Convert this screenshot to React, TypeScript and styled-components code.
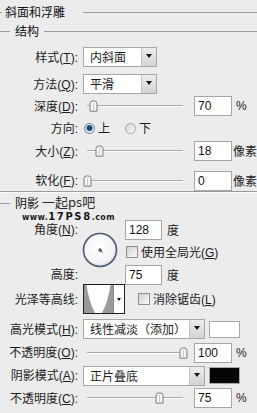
import { createGlobalStyle, styled } from 'styled-components';

const cjk = `"Noto Sans CJK SC", "Liberation Sans", sans-serif`;
const latin = `"Liberation Sans", Arial, sans-serif`;

const GlobalStyle = createGlobalStyle`
  body {
    margin: 0;
    background: #ececec;
  }
`;

type SliderRow = {
  label: string;
  key: string;
  pos: number;
  value: string;
  unit: string;
};

const Mn = ({ label, k }: { label: string; k?: string }) => (
  <>
    {label}
    <Latin>
      {k && (
        <>
          (<Mnemonic>{k}</Mnemonic>)
        </>
      )}
      :
    </Latin>
  </>
);

const Slider = ({ pos }: { pos: number }) => (
  <SliderBox>
    <Track />
    <ThumbWrap style={{ left: 4 + pos * 96 - 4.5 }}>
      <svg width="9" height="12" viewBox="0 0 9 12">
        <path
          d="M1 3.5 Q1 0.8 4.5 0.8 Q8 0.8 8 3.5 L8 11.2 L1 11.2 Z"
          fill="#f4f4f4"
          stroke="#7c7c7c"
          strokeWidth="1"
        />
        <line x1="4.5" y1="3" x2="4.5" y2="10" stroke="#c9c9c9" />
      </svg>
    </ThumbWrap>
  </SliderBox>
);

const structureSliders: SliderRow[] = [
  { label: '大小', key: 'Z', pos: 0.135, value: '18', unit: '像素' },
  { label: '软化', key: 'F', pos: 0, value: '0', unit: '像素' },
];

export default function App() {
  return (
    <>
      <GlobalStyle />
      <Panel>
        <TitleRow>
          <Tick $w={2} />
          <TitleText>斜面和浮雕</TitleText>
          <Rule />
        </TitleRow>

        <GroupRow>
          <Tick $w={10} />
          <GroupText>结构</GroupText>
          <Rule />
        </GroupRow>

        <Row $mt={9} $h={20}>
          <Label>
            <Mn label="样式" k="T" />
          </Label>
          <Select $w={74}>
            <SelectText>内斜面</SelectText>
            <SelectArrow />
          </Select>
        </Row>

        <Row $mt={7} $h={20}>
          <Label>
            <Mn label="方法" k="Q" />
          </Label>
          <Select $w={74}>
            <SelectText>平滑</SelectText>
            <SelectArrow />
          </Select>
        </Row>

        <Row $mt={2} $h={20}>
          <Label>
            <Mn label="深度" k="D" />
          </Label>
          <Slider pos={0.07} />
          <NumberBox $w={38}>70</NumberBox>
          <Unit>%</Unit>
        </Row>

        <Row $mt={5} $h={14}>
          <Label>
            <Mn label="方向" />
          </Label>
          <RadioGroup>
            <RadioOption>
              <Radio $on />上
            </RadioOption>
            <RadioOption>
              <Radio />下
            </RadioOption>
          </RadioGroup>
        </Row>

        {structureSliders.map((s, i) => (
          <Row key={s.key} $mt={i === 0 ? 6 : 10} $h={i === 0 ? 20 : 19}>
            <Label>
              <Mn label={s.label} k={s.key} />
            </Label>
            <Slider pos={s.pos} />
            <NumberBox $w={38}>{s.value}</NumberBox>
            <Unit $tight>{s.unit}</Unit>
          </Row>
        ))}

        <Separator />

        <GroupRow $mt={3}>
          <Tick $w={10} />
          <GroupText>阴影</GroupText>
        </GroupRow>

        <AngleGrid>
          <GridLabel $row={1}>
            <Mn label="角度" k="N" />
          </GridLabel>
          <Dial>
            <svg width="36" height="36" viewBox="0 0 36 36">
              <defs>
                <radialGradient id="dialFill" cx="45%" cy="40%" r="65%">
                  <stop offset="0%" stopColor="#ffffff" />
                  <stop offset="75%" stopColor="#f3f3f5" />
                  <stop offset="100%" stopColor="#c9ccd6" />
                </radialGradient>
              </defs>
              <circle cx="18" cy="18" r="16.5" fill="url(#dialFill)" stroke="#4d5872" strokeWidth="1.6" />
              <line x1="16" y1="18" x2="20" y2="18" stroke="#333" strokeWidth="1" />
              <line x1="18" y1="16" x2="18" y2="20" stroke="#333" strokeWidth="1" />
              <line x1="18" y1="18" x2="20.5" y2="20.5" stroke="#333" strokeWidth="1" />
            </svg>
          </Dial>
          <GridControl $row={1}>
            <NumberBox $w={37}>128</NumberBox>
            <Unit $gap={5}>度</Unit>
          </GridControl>
          <GridControl $row={2}>
            <CheckOption $ml={1}>
              <CheckBox />
              <span>
                使用全局光
                <Latin>
                  (<Mnemonic>G</Mnemonic>)
                </Latin>
              </span>
            </CheckOption>
          </GridControl>
          <GridLabel $row={3}>
            <Mn label="高度" />
          </GridLabel>
          <GridControl $row={3}>
            <NumberBox $w={37}>75</NumberBox>
            <Unit $gap={5}>度</Unit>
          </GridControl>
        </AngleGrid>

        <Row $mt={0} $h={30}>
          <Label>
            <Mn label="光泽等高线" />
          </Label>
          <ContourBox>
            <ContourPreview>
              <svg width="29" height="28" viewBox="0 0 29 28">
                <rect width="29" height="28" fill="#fff" />
                <path d="M0 0 L2.5 0 Q5 17 11 28 L0 28 Z" fill="#9a9a9a" />
                <path d="M29 0 L26.5 0 Q24 17 18 28 L29 28 Z" fill="#9a9a9a" />
              </svg>
            </ContourPreview>
            <ContourArrow />
          </ContourBox>
          <CheckOption $ml={13}>
            <CheckBox />
            <span>
              消除锯齿
              <Latin>
                (<Mnemonic>L</Mnemonic>)
              </Latin>
            </span>
          </CheckOption>
        </Row>

        <Row $mt={5} $h={20}>
          <Label>
            <Mn label="高光模式" k="H" />
          </Label>
          <Select $w={122}>
            <SelectText>线性减淡（添加）</SelectText>
            <SelectArrow />
          </Select>
          <Swatch $color="#ffffff" />
        </Row>

        <Row $mt={4} $h={19}>
          <Label>
            <Mn label="不透明度" k="O" />
          </Label>
          <Slider pos={1} />
          <NumberBox $w={38}>100</NumberBox>
          <Unit>%</Unit>
        </Row>

        <Row $mt={4} $h={19}>
          <Label>
            <Mn label="阴影模式" k="A" />
          </Label>
          <Select $w={122}>
            <SelectText>正片叠底</SelectText>
            <SelectArrow />
          </Select>
          <Swatch $color="#050505" />
        </Row>

        <Row $mt={3} $h={20}>
          <Label>
            <Mn label="不透明度" k="C" />
          </Label>
          <Slider pos={0.75} />
          <NumberBox $w={38}>75</NumberBox>
          <Unit>%</Unit>
        </Row>

        <Watermark>
          <WatermarkTop>一起ps吧</WatermarkTop>
          <WatermarkUrl>
            www.<Big>17PS8</Big>.com
          </WatermarkUrl>
        </Watermark>
      </Panel>
    </>
  );
}

const Panel = styled.div`
  position: relative;
  display: flex;
  flex-direction: column;
  width: 257px;
  height: 413px;
  overflow: hidden;
  background: #ececec;
  color: #1c1c1c;
  font: 12px/1 ${cjk};
`;

const TitleRow = styled.div`
  display: flex;
  align-items: center;
  height: 24px;
  flex-shrink: 0;
`;

const TitleText = styled.div`
  width: 81px;
  padding-left: 3px;
  box-sizing: border-box;
  color: #111;
`;

const GroupRow = styled.div<{ $mt?: number }>`
  display: flex;
  align-items: center;
  gap: 5px;
  height: 14px;
  margin-top: ${({ $mt }) => $mt ?? 0}px;
  flex-shrink: 0;
`;

const GroupText = styled.div`
  color: #111;
`;

const Tick = styled.div<{ $w: number }>`
  width: ${({ $w }) => $w}px;
  border-top: 1px solid #9c9c9c;
  flex-shrink: 0;
`;

const Rule = styled.div`
  flex: 1;
  border-top: 1px solid #9c9c9c;
`;

const Separator = styled.div`
  height: 0;
  margin-top: 1px;
  border-top: 1px solid #9c9c9c;
  border-bottom: 1px solid #fafafa;
  flex-shrink: 0;
`;

const Row = styled.div<{ $mt: number; $h: number }>`
  display: flex;
  align-items: center;
  height: ${({ $h }) => $h}px;
  margin-top: ${({ $mt }) => $mt}px;
  flex-shrink: 0;
`;

const Label = styled.div`
  width: 83px;
  padding-right: 5px;
  box-sizing: border-box;
  text-align: right;
  white-space: nowrap;
  flex-shrink: 0;
`;

const Latin = styled.span`
  font-family: ${latin};
`;

const Mnemonic = styled.span`
  text-decoration: underline;
  text-underline-offset: 1px;
`;

const Select = styled.div<{ $w: number }>`
  display: flex;
  width: ${({ $w }) => $w}px;
  height: 20px;
  box-sizing: border-box;
  border: 1px solid #a7a7a7;
  background: #fff;
  flex-shrink: 0;
`;

const SelectText = styled.div`
  flex: 1;
  display: flex;
  align-items: center;
  padding-left: 6px;
  white-space: nowrap;
  overflow: hidden;
`;

const SelectArrow = styled.div`
  width: 14px;
  display: flex;
  align-items: center;
  justify-content: center;
  border-left: 1px solid #c2c2c2;
  background: linear-gradient(#ededed, #d3d3d3);

  &::after {
    content: '';
    border-left: 3.5px solid transparent;
    border-right: 3.5px solid transparent;
    border-top: 4px solid #151515;
    margin-top: -2px;
  }
`;

const SliderBox = styled.div`
  position: relative;
  display: flex;
  align-items: center;
  width: 111px;
  height: 100%;
  padding: 0 11px 0 4px;
  box-sizing: border-box;
  flex-shrink: 0;
`;

const Track = styled.div`
  flex: 1;
  height: 0;
  border-top: 1px solid #a9a9a9;
  border-bottom: 1px solid #fdfdfd;
`;

const ThumbWrap = styled.div`
  position: absolute;
  top: 50%;
  width: 9px;
  height: 12px;
  margin-top: -6px;
  line-height: 0;
`;

const NumberBox = styled.div<{ $w: number }>`
  display: flex;
  align-items: center;
  width: ${({ $w }) => $w}px;
  height: 20px;
  padding-left: 3px;
  box-sizing: border-box;
  border: 1px solid #a5a5a5;
  background: #fff;
  font: 12px/1 ${latin};
  color: #111;
  flex-shrink: 0;
`;

const Unit = styled.div<{ $tight?: boolean; $gap?: number }>`
  margin-left: ${({ $tight, $gap }) => $gap ?? ($tight ? 1 : 4)}px;
  font-family: ${({ $tight, $gap }) => ($tight || $gap ? cjk : latin)};
  white-space: nowrap;
`;

const RadioGroup = styled.div`
  display: flex;
  align-items: center;
  gap: 15px;
  margin-left: 1px;
`;

const RadioOption = styled.div`
  display: flex;
  align-items: center;
  gap: 3px;
`;

const Radio = styled.span<{ $on?: boolean }>`
  width: 11px;
  height: 11px;
  border-radius: 50%;
  box-sizing: border-box;
  border: 1px solid ${({ $on }) => ($on ? '#6f7f92' : '#a3a3a3')};
  background: ${({ $on }) =>
    $on
      ? 'radial-gradient(circle at 50% 45%, #17486f 0 2px, #3f7bab 2.8px, #e9eef3 3.6px, #d6dbe0 100%)'
      : 'linear-gradient(135deg, #d3d3d3, #fbfbfb)'};
`;

const AngleGrid = styled.div`
  display: grid;
  grid-template-columns: 83px 42px 1fr;
  grid-template-rows: 19px 26px 19px;
  margin-top: 10px;
  flex-shrink: 0;
`;

const GridLabel = styled(Label)<{ $row: number }>`
  grid-column: 1;
  grid-row: ${({ $row }) => $row};
  align-self: center;
`;

const GridControl = styled.div<{ $row: number }>`
  grid-column: 3;
  grid-row: ${({ $row }) => $row};
  display: flex;
  align-items: center;
`;

const Dial = styled.div`
  grid-column: 2;
  grid-row: 1 / 4;
  align-self: start;
  margin: 12px 0 0 -1px;
  width: 36px;
  height: 36px;
  line-height: 0;
`;

const CheckOption = styled.div<{ $ml: number }>`
  display: flex;
  align-items: center;
  gap: 3px;
  margin-left: ${({ $ml }) => $ml}px;
  white-space: nowrap;
`;

const CheckBox = styled.span`
  width: 12px;
  height: 12px;
  box-sizing: border-box;
  border: 1px solid #8f8f8f;
  background: linear-gradient(135deg, #d0d0d0, #fbfbfb);
  flex-shrink: 0;
`;

const ContourBox = styled.div`
  display: flex;
  width: 42px;
  height: 30px;
  box-sizing: border-box;
  border: 1px solid #1e1e1e;
  background: #fff;
  flex-shrink: 0;
`;

const ContourPreview = styled.div`
  width: 29px;
  line-height: 0;
`;

const ContourArrow = styled.div`
  flex: 1;
  display: flex;
  align-items: center;
  justify-content: center;
  border-left: 1px solid #8a8a8a;

  &::after {
    content: '';
    border-left: 2.5px solid transparent;
    border-right: 2.5px solid transparent;
    border-top: 3px solid #111;
  }
`;

const Swatch = styled.div<{ $color: string }>`
  width: 31px;
  height: 17px;
  margin-left: 4px;
  box-sizing: border-box;
  border: 1px solid #a8a8a8;
  background: ${({ $color }) => $color};
  flex-shrink: 0;
`;

const Watermark = styled.div`
  position: absolute;
  left: 22px;
  top: 195px;
  display: flex;
  flex-direction: column;
  pointer-events: none;
`;

const WatermarkTop = styled.div`
  margin-left: 20px;
  font: 13px/1 ${cjk};
  color: #2b2b2b;
`;

const WatermarkUrl = styled.div`
  margin-top: 4px;
  font: bold 8px/1 "DejaVu Sans", sans-serif;
  color: #161616;
  letter-spacing: 0.4px;
  text-shadow: 0 0 1px #fff;
`;

const Big = styled.span`
  font-size: 10px;
  font-weight: 900;
  letter-spacing: 1.6px;
`;
